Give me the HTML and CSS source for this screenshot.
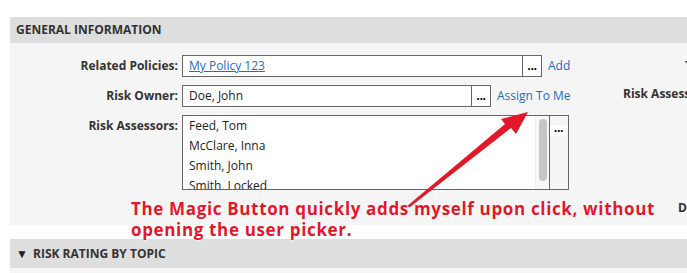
FILE: index.html
```html
<!DOCTYPE html>
<html lang="en">
<head>
    <meta charset="UTF-8">
    <title>Risk Assessment</title>
    <link rel="stylesheet" href="styles.css">
</head>
<body>
    <div class="page">
        <section class="panel">
            <div class="panel-head">General Information</div>
            <div class="panel-body">
                <div class="col-left">
                    <div class="form-row">
                        <label>Related Policies:</label>
                        <div class="picker picker-wide">
                            <div class="picker-value"><a href="#">My Policy 123</a></div>
                            <span class="dots">...</span>
                        </div>
                        <a href="#" class="action">Add</a>
                    </div>
                    <div class="form-row">
                        <label>Risk Owner:</label>
                        <div class="picker picker-mid">
                            <div class="picker-value">Doe, John</div>
                            <span class="dots">...</span>
                        </div>
                        <a href="#" class="action">Assign To Me</a>
                    </div>
                    <div class="form-row">
                        <label>Risk Assessors:</label>
                        <div class="listbox">
                            <ul class="list-items">
                                <li>Feed, Tom</li>
                                <li>McClare, Inna</li>
                                <li>Smith, John</li>
                                <li>Smith, Locked</li>
                            </ul>
                            <div class="scroll"><div class="thumb"></div></div>
                            <div class="list-btn"><span class="dots">...</span></div>
                        </div>
                    </div>
                </div>
                <div class="col-right">
                    <div class="side-label side-1">Target Date:</div>
                    <div class="side-label side-2">Risk Assessment Date:</div>
                    <div class="side-label side-3">Date Closed:</div>
                </div>
            </div>
        </section>

        <section class="panel">
            <div class="panel-head panel-head-toggle"><span class="caret">&#9660;</span>Risk Rating by Topic</div>
            <div class="panel-body panel-body-empty"></div>
        </section>

        <!-- screenshot annotation -->
        <svg class="arrow" width="687" height="273" viewBox="0 0 687 273">
            <polygon points="406,207 505,124 501,119 528,112 516,134 511,128 410,207" fill="#e3172a"/>
        </svg>
        <div class="note">The Magic Button quickly adds myself upon click, without<br>opening the user picker.</div>
    </div>
</body>
</html>
```

FILE: styles.css
```css
html, body {
    margin: 0;
    padding: 0;
    overflow: hidden;
    background: #fff;
}
body {
    font-family: "Open Sans", Arial, sans-serif;
    font-size: 12px;
    color: #333;
}
.page {
    position: relative;
    width: 687px;
    height: 273px;
    padding: 17px 0 0 10px;
    box-sizing: border-box;
    overflow: hidden;
}
.panel-head {
    height: 26px;
    line-height: 26px;
    background: #dedede;
    padding-left: 6px;
    font-weight: bold;
    text-transform: uppercase;
    color: #333;
}
.panel-head-toggle {
    height: 29px;
    line-height: 29px;
    padding-left: 6px;
}
.caret {
    display: inline-block;
    width: 10px;
    font-size: 12px;
    margin-right: 7px;
    color: #222;
}
.panel-body {
    display: flex;
    background: #f5f5f5;
    height: 182px;
    padding-top: 12px;
    box-sizing: border-box;
    margin-bottom: 14px;
}
.panel-body-empty {
    height: 10px;
    padding: 0;
    margin: 0;
}
.col-left {
    display: flex;
    flex-direction: column;
    gap: 8px;
    width: 585px;
    flex-shrink: 0;
}
.form-row {
    display: flex;
    align-items: flex-start;
}
.form-row label {
    width: 168px;
    text-align: right;
    font-weight: bold;
    line-height: 22px;
    margin-right: 4px;
    flex-shrink: 0;
}
.picker {
    display: flex;
    height: 22px;
    border: 1px solid #666;
    box-sizing: border-box;
    background: #fff;
}
.picker-wide { width: 360px; }
.picker-mid { width: 309px; }
.picker-value {
    flex: 1;
    padding-left: 6px;
    line-height: 20px;
    color: #222;
}
.picker-value a {
    color: #1e6dc8;
}
.dots {
    width: 18px;
    border-left: 1px solid #666;
    font-family: Arial, "Liberation Sans", sans-serif;
    font-weight: 900;
    font-size: 13px;
    line-height: 20px;
    text-align: center;
    color: #111;
    letter-spacing: -0.5px;
}
.action {
    margin-left: 6px;
    line-height: 22px;
    color: #1e6dc8;
    text-decoration: none;
}
.listbox {
    display: flex;
    width: 387px;
    height: 75px;
    border: 1px solid #666;
    box-sizing: border-box;
    background: #fff;
}
.list-items {
    flex: 1;
    margin: 0;
    padding: 0 0 0 6px;
    list-style: none;
    overflow: hidden;
    color: #222;
}
.list-items li {
    height: 20px;
    line-height: 20px;
}
.scroll {
    width: 14px;
    background: #f7f7f7;
    border-left: 1px solid #ececec;
    padding: 3px 2px 0 3px;
    box-sizing: border-box;
}
.thumb {
    height: 62px;
    background: #c6c6c6;
    border-radius: 4px;
}
.list-btn {
    width: 18px;
    background: #f5f5f5;
    border-left: 1px solid #666;
    padding-top: 9px;
}
.list-btn .dots {
    display: block;
    width: 17px;
    height: 11px;
    line-height: 6px;
    border-left: 0;
    background: #fff;
}
.col-right {
    position: relative;
    flex: 1;
}
.side-label {
    position: absolute;
    font-weight: bold;
    white-space: nowrap;
    line-height: 16px;
}
.side-1 { top: 3px; left: 90px; }
.side-2 { top: 31px; left: 28px; }
.side-3 { top: 145px; left: 83px; }
.arrow {
    position: absolute;
    left: 0;
    top: 0;
}
.note {
    position: absolute;
    left: 131px;
    top: 198px;
    font-weight: bold;
    font-size: 17px;
    line-height: 21px;
    letter-spacing: 0.65px;
    color: #e3172a;
    white-space: nowrap;
    text-shadow: 0 0 2px #fff, 0 0 2px #fff, 0 0 2px #fff;
}
```
